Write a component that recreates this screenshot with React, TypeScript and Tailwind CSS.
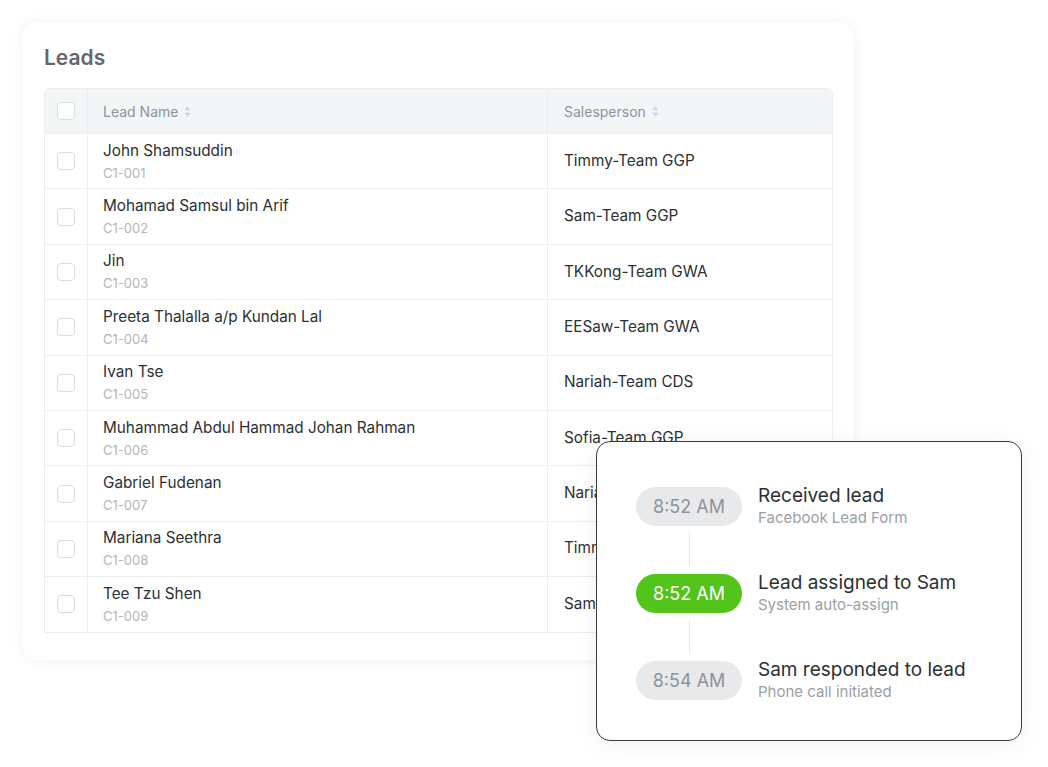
import React from 'react';

const leads = [
  { name: "John Shamsuddin", code: "C1-001", sales: "Timmy-Team GGP" },
  { name: "Mohamad Samsul bin Arif", code: "C1-002", sales: "Sam-Team GGP" },
  { name: "Jin", code: "C1-003", sales: "TKKong-Team GWA" },
  { name: "Preeta Thalalla a/p Kundan Lal", code: "C1-004", sales: "EESaw-Team GWA" },
  { name: "Ivan Tse", code: "C1-005", sales: "Nariah-Team CDS" },
  { name: "Muhammad Abdul Hammad Johan Rahman", code: "C1-006", sales: "Sofia-Team GGP" },
  { name: "Gabriel Fudenan", code: "C1-007", sales: "Nariah-Team CDS" },
  { name: "Mariana Seethra", code: "C1-008", sales: "Timmy-Team GGP" },
  { name: "Tee Tzu Shen", code: "C1-009", sales: "Sam-Team GGP" },
];

const events = [
  { time: "8:52 AM", title: "Received lead", sub: "Facebook Lead Form", active: false },
  { time: "8:52 AM", title: "Lead assigned to Sam", sub: "System auto-assign", active: true },
  { time: "8:54 AM", title: "Sam responded to lead", sub: "Phone call initiated", active: false },
];

const Checkbox = () => (
  <div className="w-[18px] h-[18px] rounded-[4px] border border-[#d9dde1] bg-white" />
);

const SortIcon = () => (
  <svg width="7" height="11" viewBox="0 0 7 11" className="ml-[6px]">
    <path d="M3.5 0.5 L6.5 4.2 H0.5 Z" fill="#cdd2d7" />
    <path d="M3.5 10.5 L6.5 6.8 H0.5 Z" fill="#cdd2d7" />
  </svg>
);

const App: React.FC = () => {
  return (
    <div className="relative w-[1048px] h-[767px] bg-white overflow-hidden" style={{ fontFamily: 'Inter, "Noto Sans", sans-serif' }}>
      <div className="ml-[22px] mt-[22px] w-[832px] h-[638px] rounded-[16px] bg-white shadow-[0_0_14px_rgba(0,0,0,0.06)] px-[22px] pt-[22px]">
        <h1 className="text-[21px] leading-[28px] font-semibold text-[#63676b] mb-[16px]">Leads</h1>
        <div className="w-[789px] border border-[#eceef0] rounded-t-[6px] overflow-hidden">
          <div className="flex h-[44px] bg-[#f3f6f7] text-[14px] text-[#8d949b]">
            <div className="w-[43px] flex items-center justify-center border-r border-[#e9ecee]"><Checkbox /></div>
            <div className="w-[460px] flex items-center pl-[15px] border-r border-[#e9ecee]">Lead Name<SortIcon /></div>
            <div className="flex-1 flex items-center pl-[16px]">Salesperson<SortIcon /></div>
          </div>
          {leads.map((l, i) => (
            <div key={i} className="flex h-[55.4px] border-t border-[#eceef0]">
              <div className="w-[43px] flex items-center justify-center border-r border-[#eceef0]"><Checkbox /></div>
              <div className="w-[460px] flex flex-col justify-center pl-[15px] border-r border-[#eceef0]">
                <div className="text-[15.3px] leading-[20px] text-[#2b2f33]">{l.name}</div>
                <div className="text-[13px] leading-[18px] mt-[3px] text-[#b2b6ba]">{l.code}</div>
              </div>
              <div className="flex-1 flex items-center pl-[16px] text-[15.3px] text-[#2b2f33]">{l.sales}</div>
            </div>
          ))}
        </div>
      </div>

      <div className="absolute left-[596px] top-[441px] w-[426px] h-[300px] bg-white border border-[#3a3a3a] rounded-[14px] shadow-[0_4px_24px_rgba(0,0,0,0.06)] pl-[39px] pt-[42px]">
        {events.map((e, i) => (
          <div key={i}>
            {i > 0 && <div className="ml-[53px] w-px h-[33px] bg-[#e4e6e8] my-[5px]" />}
            <div className="flex items-center">
              <div className={`w-[106px] h-[39px] rounded-full flex items-center justify-center text-[18px] ${e.active ? 'bg-[#52c41a] text-white' : 'bg-[#e8e9ea] text-[#8e9399]'}`}>{e.time}</div>
              <div className="ml-[16px] flex flex-col">
                <div className="text-[19px] leading-[24px] text-[#2b2f33]">{e.title}</div>
                <div className="text-[15px] leading-[20px] text-[#9aa0a6]">{e.sub}</div>
              </div>
            </div>
          </div>
        ))}
      </div>
    </div>
  );
};

export default App;
